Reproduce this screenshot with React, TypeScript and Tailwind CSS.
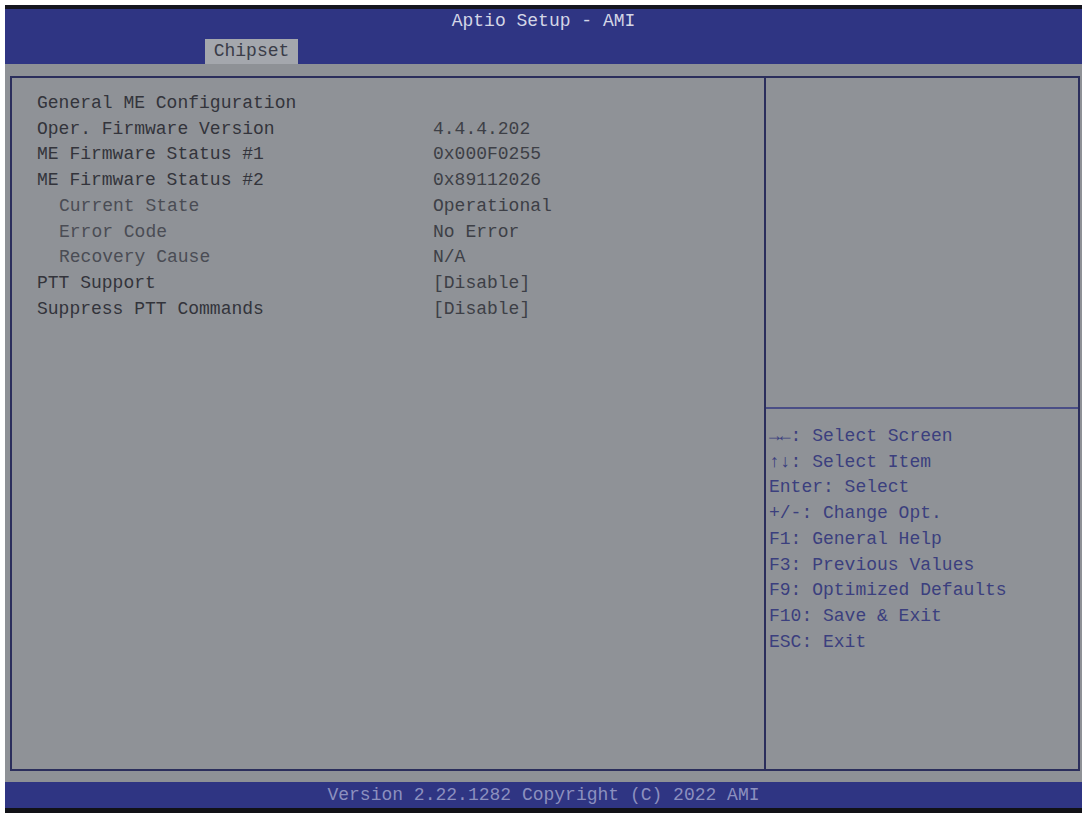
import React from 'react';

const rows: { label: string; value?: string; sub?: boolean }[] = [
  { label: 'General ME Configuration' },
  { label: 'Oper. Firmware Version', value: '4.4.4.202' },
  { label: 'ME Firmware Status #1', value: '0x000F0255' },
  { label: 'ME Firmware Status #2', value: '0x89112026' },
  { label: 'Current State', value: 'Operational', sub: true },
  { label: 'Error Code', value: 'No Error', sub: true },
  { label: 'Recovery Cause', value: 'N/A', sub: true },
  { label: 'PTT Support', value: '[Disable]' },
  { label: 'Suppress PTT Commands', value: '[Disable]' },
];

const help = [
  '\u2192\u2190: Select Screen',
  '\u2191\u2193: Select Item',
  'Enter: Select',
  '+/-: Change Opt.',
  'F1: General Help',
  'F3: Previous Values',
  'F9: Optimized Defaults',
  'F10: Save & Exit',
  'ESC: Exit',
];

export default function App() {
  return (
    <div
      className="w-[1084px] h-[818px] bg-white overflow-hidden pt-[5px] pl-[5px] pr-[2px]"
      style={{ fontFamily: '"Liberation Mono", "DejaVu Sans Mono", monospace' }}
    >
      <div className="flex flex-col h-[808px] bg-[#8e9196] border-t-[4px] border-[#15161f]">
        {/* Header */}
        <div className="relative h-[55px] bg-[#2f3583] flex flex-col items-center">
          <div className="pt-[1px] text-[18px] leading-[22px] text-[#d4d6e6]">Aptio Setup - AMI</div>
          <div className="absolute left-[200px] bottom-0 w-[93px] h-[25px] bg-[#a4a7ad] flex items-center justify-center text-[18px] text-[#3a3c48]">
            Chipset
          </div>
        </div>

        {/* Body */}
        <div className="flex-1 pt-[12px] pl-[5px] pr-[2px] pb-[11px] flex">
          <div className="flex-1 flex border-2 border-[#2b2e5c] bg-[#8f9297]">
            <div className="w-[754px] border-r-2 border-[#2b2e5c] pt-[13px] pl-[25px] text-[18px] leading-[25.7px] text-[#33343b]">
              {rows.map((r) => (
                <div key={r.label} className="flex">
                  <div className={`w-[396px] ${r.sub ? 'pl-[22px] text-[#4a4c54]' : ''}`}>{r.label}</div>
                  {r.value && <div className="text-[#3d3f46]">{r.value}</div>}
                </div>
              ))}
            </div>
            <div className="flex-1 flex flex-col">
              <div className="h-[331px] border-b-2 border-[#4a4e86]" />
              <div className="pt-[15px] pl-[3px] text-[18px] leading-[25.7px] text-[#3b3f7e]">
                {help.map((h) => (
                  <div key={h}>{h}</div>
                ))}
              </div>
            </div>
          </div>
        </div>

        {/* Footer */}
        <div className="h-[26px] bg-[#2f3583] flex items-center justify-center text-[18px] text-[#8c90bf]">
          Version 2.22.1282 Copyright (C) 2022 AMI
        </div>
        <div className="h-[5px] bg-[#111217]" />
      </div>
    </div>
  );
}
